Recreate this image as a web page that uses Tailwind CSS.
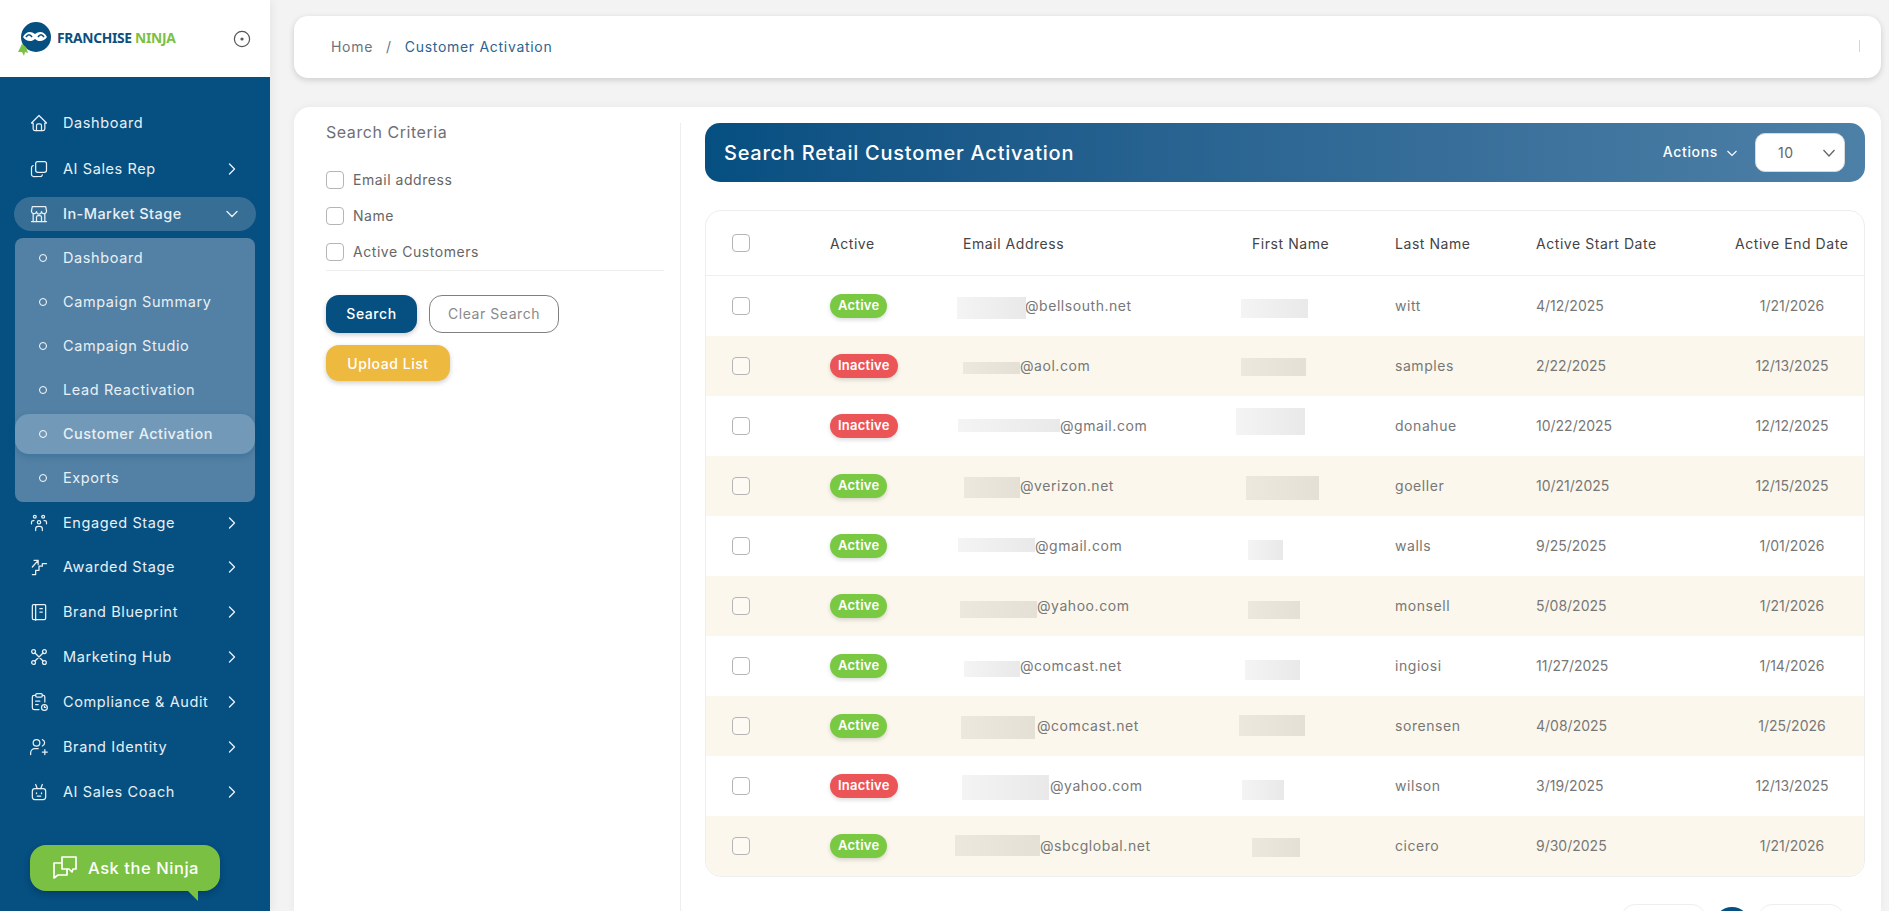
<!DOCTYPE html>
<html lang="en">
<head>
  <meta charset="UTF-8">
  <meta name="viewport" content="width=device-width, initial-scale=1.0">
  <script src="https://cdn.jsdelivr.net/npm/@tailwindcss/browser@4"></script>
  <title>Customer Activation - Franchise Ninja</title>
</head>
<body class="h-screen overflow-hidden bg-[#f3f3f3] font-['Inter',sans-serif] tracking-[0.55px]">
  <div class="flex h-full">
    <!-- Sidebar -->
    <aside class="w-[270px] h-full shrink-0 flex flex-col bg-[#054f81] shadow-[2px_0_8px_rgba(0,0,0,0.06)]">
      <div class="h-[77px] bg-white flex items-center pl-[17px] pr-[19px] shrink-0">
        <svg class="w-[36px] h-[34px] shrink-0" viewBox="0 0 36 34">
          <circle cx="19" cy="15" r="15" fill="#054f81"/>
          <path d="M1 30l4-8 4 3 2 6-3-1-1 4-2-4z" fill="#7ac143"/>
          <path d="M6 15c3-6 8-6 12-3 4-3 9-3 12 3-3 5-9 5-12 2-3 3-9 3-12-2z" fill="#fff"/>
          <path d="M9 15c2-3 4-3 6 0M21 15c2-3 4-3 6 0" fill="none" stroke="#054f81" stroke-width="1.6"/>
        </svg>
        <span class="ml-[4px] font-['Noto_Sans',sans-serif] font-bold text-[13.8px] tracking-[-0.3px] text-[#0b4f7e] whitespace-nowrap">FRANCHISE <span class="text-[#7ac143]">NINJA</span></span>
        <svg class="w-[18px] h-[18px] ml-auto" viewBox="0 0 18 18" fill="none" stroke="#555" stroke-width="1.2"><circle cx="9" cy="9" r="7.6"/><circle cx="9" cy="9" r="1" fill="#555"/></svg>
      </div>

      <nav class="text-[14.5px] text-[#e8f0f5] tracking-[0.6px] pt-[22px]">
        <a class="flex items-center h-[47px] pl-[29px] pr-[30px]">
          <svg class="w-5 h-5 mr-[14px]" viewBox="0 0 24 24" fill="none" stroke="currentColor" stroke-width="1.5" stroke-linecap="round" stroke-linejoin="round"><path d="M3 12l9-9 9 9h-2v7a2 2 0 0 1-2 2H7a2 2 0 0 1-2-2v-7z"/><path d="M9 21v-6a2 2 0 0 1 2-2h2a2 2 0 0 1 2 2v6"/></svg>
          Dashboard
        </a>
        <a class="flex items-center h-[45px] pl-[29px] pr-[30px]">
          <svg class="w-5 h-5 mr-[14px]" viewBox="0 0 24 24" fill="none" stroke="currentColor" stroke-width="1.5" stroke-linecap="round" stroke-linejoin="round"><rect x="8" y="3" width="13" height="13" rx="2.5"/><path d="M16 19a2.500 2.500 0 0 1-2.500 2h-8A2.500 2.500 0 0 1 3 18.500v-8A2.500 2.500 0 0 1 5 8"/></svg>
          AI Sales Rep
          <svg class="w-4 h-4 ml-auto" viewBox="0 0 16 16" fill="none" stroke="currentColor" stroke-width="1.4" stroke-linecap="round" stroke-linejoin="round"><path d="M5.500 3L10.500 8l-5 5"/></svg>
        </a>
        <a class="flex items-center h-[34px] mt-[6px] mx-[14px] pl-[15px] pr-[16px] rounded-[17px] bg-[#366e96] font-medium tracking-[0.45px]">
          <svg class="w-5 h-5 mr-[14px]" viewBox="0 0 24 24" fill="none" stroke="currentColor" stroke-width="1.5" stroke-linecap="round" stroke-linejoin="round"><path d="M3 21h18M4 3h16l1 5a3 3 0 0 1-6 1 3 3 0 0 1-6 0 3 3 0 0 1-6-1z"/><path d="M5 12v9M19 12v9M9 21v-5a2 2 0 0 1 2-2h2a2 2 0 0 1 2 2v5"/></svg>
          In-Market Stage
          <svg class="w-4 h-4 ml-auto" viewBox="0 0 16 16" fill="none" stroke="currentColor" stroke-width="1.4" stroke-linecap="round" stroke-linejoin="round"><path d="M3 5.500L8 10.500l5-5"/></svg>
        </a>
        <div class="mt-[7px] mx-[15px] pb-[4px] bg-[#5381a5] rounded-[8px] flex flex-col gap-[4px]">
          <a class="flex items-center h-[40px] pl-[24px]"><span class="w-2 h-2 rounded-full border border-white mr-[16px]"></span>Dashboard</a>
          <a class="flex items-center h-[40px] pl-[24px]"><span class="w-2 h-2 rounded-full border border-white mr-[16px]"></span>Campaign Summary</a>
          <a class="flex items-center h-[40px] pl-[24px]"><span class="w-2 h-2 rounded-full border border-white mr-[16px]"></span>Campaign Studio</a>
          <a class="flex items-center h-[40px] pl-[24px]"><span class="w-2 h-2 rounded-full border border-white mr-[16px]"></span>Lead Reactivation</a>
          <a class="flex items-center h-[40px] pl-[24px] rounded-[14px] bg-[#7299b7] font-medium tracking-[0.45px] shadow-[0_3px_6px_rgba(5,79,129,0.25)]"><span class="w-2 h-2 rounded-full border border-white mr-[16px]"></span>Customer Activation</a>
          <a class="flex items-center h-[40px] pl-[24px]"><span class="w-2 h-2 rounded-full border border-white mr-[16px]"></span>Exports</a>
        </div>
        <a class="flex items-center h-[42px] pl-[29px] pr-[30px]">
          <svg class="w-5 h-5 mr-[14px]" viewBox="0 0 24 24" fill="none" stroke="currentColor" stroke-width="1.5" stroke-linecap="round" stroke-linejoin="round"><circle cx="7" cy="4.500" r="1.700"/><circle cx="17" cy="4.500" r="1.700"/><circle cx="12" cy="11" r="2"/><path d="M8 21v-2a3 3 0 0 1 3-3h2a3 3 0 0 1 3 3v2M3 13v-2a2 2 0 0 1 2-2h1M21 13v-2a2 2 0 0 0-2-2h-1"/></svg>
          Engaged Stage
          <svg class="w-4 h-4 ml-auto" viewBox="0 0 16 16" fill="none" stroke="currentColor" stroke-width="1.4" stroke-linecap="round" stroke-linejoin="round"><path d="M5.500 3L10.500 8l-5 5"/></svg>
        </a>
        <a class="flex items-center h-[45px] pl-[29px] pr-[30px]">
          <svg class="w-5 h-5 mr-[14px]" viewBox="0 0 24 24" fill="none" stroke="currentColor" stroke-width="1.5" stroke-linecap="round" stroke-linejoin="round"><path d="M4 21h4v-5h4v-5h4V8h5"/><path d="M4 12l7-8M6 4h5v5"/></svg>
          Awarded Stage
          <svg class="w-4 h-4 ml-auto" viewBox="0 0 16 16" fill="none" stroke="currentColor" stroke-width="1.4" stroke-linecap="round" stroke-linejoin="round"><path d="M5.500 3L10.500 8l-5 5"/></svg>
        </a>
        <a class="flex items-center h-[45px] pl-[29px] pr-[30px]">
          <svg class="w-5 h-5 mr-[14px]" viewBox="0 0 24 24" fill="none" stroke="currentColor" stroke-width="1.5" stroke-linecap="round" stroke-linejoin="round"><rect x="4" y="3" width="16" height="18" rx="1.500"/><path d="M8 3v19M13 8h3M13 12h3"/></svg>
          Brand Blueprint
          <svg class="w-4 h-4 ml-auto" viewBox="0 0 16 16" fill="none" stroke="currentColor" stroke-width="1.4" stroke-linecap="round" stroke-linejoin="round"><path d="M5.500 3L10.500 8l-5 5"/></svg>
        </a>
        <a class="flex items-center h-[45px] pl-[29px] pr-[30px]">
          <svg class="w-5 h-5 mr-[14px]" viewBox="0 0 24 24" fill="none" stroke="currentColor" stroke-width="1.5" stroke-linecap="round" stroke-linejoin="round"><circle cx="5.500" cy="5.500" r="2.300"/><circle cx="18.500" cy="5.500" r="2.300"/><circle cx="5.500" cy="18.500" r="2.300"/><circle cx="18.500" cy="18.500" r="2.300"/><path d="M7.200 7.200l9.600 9.600M16.800 7.200l-9.600 9.600"/></svg>
          Marketing Hub
          <svg class="w-4 h-4 ml-auto" viewBox="0 0 16 16" fill="none" stroke="currentColor" stroke-width="1.4" stroke-linecap="round" stroke-linejoin="round"><path d="M5.500 3L10.500 8l-5 5"/></svg>
        </a>
        <a class="flex items-center h-[45px] pl-[29px] pr-[30px]">
          <svg class="w-5 h-5 mr-[14px]" viewBox="0 0 24 24" fill="none" stroke="currentColor" stroke-width="1.5" stroke-linecap="round" stroke-linejoin="round"><path d="M8 4H6a2 2 0 0 0-2 2v13a2 2 0 0 0 2 2h6M16 4h1a2 2 0 0 1 2 2v6"/><rect x="8" y="2" width="8" height="4" rx="1.500"/><path d="M8 11h5M8 15h3"/><circle cx="18.500" cy="18.500" r="3.500"/><path d="M18.500 17v1.500h1.500"/></svg>
          Compliance &amp; Audit
          <svg class="w-4 h-4 ml-auto" viewBox="0 0 16 16" fill="none" stroke="currentColor" stroke-width="1.4" stroke-linecap="round" stroke-linejoin="round"><path d="M5.500 3L10.500 8l-5 5"/></svg>
        </a>
        <a class="flex items-center h-[45px] pl-[29px] pr-[30px]">
          <svg class="w-5 h-5 mr-[14px]" viewBox="0 0 24 24" fill="none" stroke="currentColor" stroke-width="1.5" stroke-linecap="round" stroke-linejoin="round"><circle cx="9" cy="7" r="4"/><path d="M2 21v-2a5 5 0 0 1 5-5h4M16 3.200a4 4 0 0 1 0 7.600M19 15v6M16 18h6"/></svg>
          Brand Identity
          <svg class="w-4 h-4 ml-auto" viewBox="0 0 16 16" fill="none" stroke="currentColor" stroke-width="1.4" stroke-linecap="round" stroke-linejoin="round"><path d="M5.500 3L10.500 8l-5 5"/></svg>
        </a>
        <a class="flex items-center h-[45px] pl-[29px] pr-[30px]">
          <svg class="w-5 h-5 mr-[14px]" viewBox="0 0 24 24" fill="none" stroke="currentColor" stroke-width="1.5" stroke-linecap="round" stroke-linejoin="round"><rect x="4" y="8" width="16" height="13" rx="3"/><path d="M8 3l2 5M16 3l-2 5M9 13v1M15 13v1M10 17h4"/></svg>
          AI Sales Coach
          <svg class="w-4 h-4 ml-auto" viewBox="0 0 16 16" fill="none" stroke="currentColor" stroke-width="1.4" stroke-linecap="round" stroke-linejoin="round"><path d="M5.500 3L10.500 8l-5 5"/></svg>
        </a>
        <!-- Ask the Ninja -->
        <button class="relative flex items-center mt-[31px] ml-[30px] w-[190px] h-[46px] pl-[22px] rounded-[16px] bg-[#7ac143] text-white text-[16.5px] font-medium tracking-[0.55px] shadow-[0_3px_6px_rgba(0,0,0,0.2)]">
          <svg class="w-[26px] h-[26px] mr-[10px]" viewBox="0 0 26 26" fill="none" stroke="currentColor" stroke-width="1.7" stroke-linejoin="round"><path d="M10 2h14v12h-3l-1 3-3-3h-7z"/><path d="M10 8H2v15l4-3h9v-6"/></svg>
          Ask the Ninja
          <span class="absolute left-[158px] top-[46px] w-0 h-0 border-l-[10px] border-l-transparent border-t-[10px] border-t-[#7ac143]"></span>
        </button>
      </nav>
    </aside>

    <!-- Content -->
    <div class="flex-1 min-w-0 pl-[24px] pr-[8px] pt-[16px] flex flex-col">
      <div class="h-[62px] shrink-0 bg-white rounded-[14px] shadow-[0_2px_6px_rgba(0,0,0,0.16)] flex items-center pb-[2px] pl-[37px] pr-[21px] text-[14px] tracking-[0.7px]">
        <span class="text-[#6b7280]">Home</span>
        <span class="text-[#6b7280] mx-[13px]">/</span>
        <span class="text-[#2c6490]">Customer Activation</span>
        <span class="ml-auto w-px h-[12px] bg-[#d5d5d5]"></span>
      </div>

      <main class="mt-[29px] flex-1 min-h-0 bg-white rounded-t-[16px] pt-[16px] flex shadow-[0_0_8px_rgba(0,0,0,0.05)]">
        <!-- Search criteria -->
        <section class="w-[387px] shrink-0 pl-[32px] pr-[16px] border-r border-[#eeeeee]">
          <h2 class="h-[18px] leading-[18px] text-[16px] text-[#6f6f78]">Search Criteria</h2>
          <div class="mt-[30px] flex flex-col gap-[18px] text-[14px] text-[#666]">
            <label class="flex items-center h-[18px]"><span class="w-[18px] h-[18px] rounded-[4px] border border-[#b5b5b5] bg-white mr-[9px]"></span><span class="mb-[2px]">Email address</span></label>
            <label class="flex items-center h-[18px]"><span class="w-[18px] h-[18px] rounded-[4px] border border-[#b5b5b5] bg-white mr-[9px]"></span><span class="mb-[2px]">Name</span></label>
            <label class="flex items-center h-[18px]"><span class="w-[18px] h-[18px] rounded-[4px] border border-[#b5b5b5] bg-white mr-[9px]"></span><span class="mb-[2px]">Active Customers</span></label>
          </div>
          <div class="mt-[9px] border-t border-[#eeeeee]"></div>
          <div class="mt-[24px] flex gap-[12px] text-[14px]">
            <button class="w-[91px] h-[38px] pb-[2px] rounded-[13px] bg-[#054f81] text-white font-medium shadow-[0_2px_5px_rgba(0,0,0,0.2)]">Search</button>
            <button class="w-[130px] h-[38px] pb-[2px] rounded-[13px] border border-[#808080] text-[#8a8a8a]">Clear Search</button>
          </div>
          <button class="mt-[12px] w-[124px] h-[36px] rounded-[13px] bg-[#eeb93f] text-white text-[14px] font-medium shadow-[0_2px_5px_rgba(0,0,0,0.2)]">Upload List</button>
        </section>

        <!-- Results -->
        <section class="flex-1 min-w-0 pl-[24px] pr-[16px]">
          <div class="h-[59px] rounded-[15px] bg-gradient-to-r from-[#054f81] to-[#4d80a7] flex items-center pl-[19px] pr-[20px] text-white">
            <h1 class="text-[20px] font-medium tracking-[0.75px]">Search Retail Customer Activation</h1>
            <span class="ml-auto mb-[2px] text-[14px] font-medium tracking-[0.65px]">Actions</span>
            <svg class="w-[12px] h-[12px] ml-[8px] mr-[17px]" viewBox="0 0 12 12" fill="none" stroke="currentColor" stroke-width="1.1"><path d="M1.500 4L6 8.500 10.500 4"/></svg>
            <div class="w-[90px] h-[39px] bg-white rounded-[10px] flex items-center pl-[22px] pr-[8px] text-[14px] text-[#666] border border-[#d9d9d9]">
              10
              <svg class="w-[14px] h-[14px] ml-auto" viewBox="0 0 14 14" fill="none" stroke="#666" stroke-width="1.300"><path d="M1.500 4L7 10l5.500-6"/></svg>
            </div>
          </div>

          <div class="mt-[28px] border border-[#eeeeee] rounded-[16px] text-[14px]">
            <div class="grid grid-cols-[124px_133px_289px_143px_141px_199px_1fr] items-center h-[65px] border-b border-[#eeeeee] text-[#444]">
              <div class="pl-[26px]"><span class="block w-[18px] h-[18px] rounded-[4px] border border-[#b5b5b5]"></span></div>
              <div>Active</div>
              <div>Email Address</div>
              <div>First Name</div>
              <div>Last Name</div>
              <div>Active Start Date</div>
              <div class="whitespace-nowrap">Active End Date</div>
            </div>
            <div id="rows"></div>
          </div>

          <!-- Pagination, cut by the bottom of the window -->
          <div class="mt-[27px] flex justify-end items-start pr-[21px] gap-[8px]">
            <button aria-label="Previous page" class="w-[85px] h-[42px] rounded-[14px] border border-[#eeeeee]"></button>
            <button aria-label="Page 1" class="w-[36px] h-[36px] mt-[3px] rounded-full bg-[#054f81]"></button>
            <button aria-label="Next page" class="w-[86px] h-[42px] rounded-[14px] border border-[#eeeeee]"></button>
          </div>
        </section>
      </main>
    </div>
  </div>

  <script>
    // masked cells: x / y / w / h are measured from the row's own corner
    const customers = [
      { active: true,  domain: '@bellsouth.net', at: 319, mail: [251, 21, 69, 22], first: [535, 23, 67, 19], last: 'witt', start: '4/12/2025', end: '1/21/2026' },
      { active: false, domain: '@aol.com', at: 314, mail: [257, 26, 57, 12], first: [535, 22, 65, 18], last: 'samples', start: '2/22/2025', end: '12/13/2025' },
      { active: false, domain: '@gmail.com', at: 354, mail: [252, 23, 102, 13], first: [530, 12, 69, 27], last: 'donahue', start: '10/22/2025', end: '12/12/2025' },
      { active: true,  domain: '@verizon.net', at: 314, mail: [258, 21, 56, 21], first: [540, 20, 73, 24], last: 'goeller', start: '10/21/2025', end: '12/15/2025' },
      { active: true,  domain: '@gmail.com', at: 329, mail: [252, 22, 77, 14], first: [542, 24, 35, 20], last: 'walls', start: '9/25/2025', end: '1/01/2026' },
      { active: true,  domain: '@yahoo.com', at: 331, mail: [254, 25, 77, 17], first: [542, 25, 52, 18], last: 'monsell', start: '5/08/2025', end: '1/21/2026' },
      { active: true,  domain: '@comcast.net', at: 314, mail: [258, 25, 56, 16], first: [539, 24, 55, 20], last: 'ingiosi', start: '11/27/2025', end: '1/14/2026' },
      { active: true,  domain: '@comcast.net', at: 331, mail: [255, 20, 74, 23], first: [533, 19, 66, 21], last: 'sorensen', start: '4/08/2025', end: '1/25/2026' },
      { active: false, domain: '@yahoo.com', at: 344, mail: [256, 19, 87, 25], first: [536, 24, 42, 20], last: 'wilson', start: '3/19/2025', end: '12/13/2025' },
      { active: true,  domain: '@sbcglobal.net', at: 334, mail: [249, 19, 85, 21], first: [546, 22, 48, 19], last: 'cicero', start: '9/30/2025', end: '1/21/2026' }
    ];

    const box = ([x, y, w, h], cls) =>
      `<span class="absolute ${cls}" style="left:${x}px;top:${y}px;width:${w}px;height:${h}px"></span>`;

    document.getElementById('rows').innerHTML = customers.map((c, i) => {
      const even = i % 2 === 1;
      const mask = even ? 'bg-gradient-to-r from-[#ece8dd] to-[#e4e0d6]' : 'bg-gradient-to-r from-[#f4f4f4] to-[#e9e9e9]';
      return `
        <div class="relative grid grid-cols-[124px_133px_289px_143px_141px_199px_1fr] items-center h-[60px] text-[#777] ${even ? 'bg-[#fbf7ec]' : ''} ${i === customers.length - 1 ? 'rounded-b-[16px]' : ''}">
          <div class="pl-[26px]"><span class="block w-[18px] h-[18px] rounded-[4px] border border-[#b5b5b5] bg-white/40"></span></div>
          <div><span class="inline-flex items-center h-[24px] px-[8px] rounded-[12px] text-[13px] font-semibold tracking-[0.25px] text-white shadow-[0_2px_4px_rgba(0,0,0,0.15)] ${c.active ? 'bg-[#7ac943]' : 'bg-[#ec5558]'}">${c.active ? 'Active' : 'Inactive'}</span></div>
          <div class="relative mb-[2px] whitespace-nowrap" style="left:${c.at - 257}px">${c.domain}</div>
          <div></div>
          <div class="mb-[2px]">${c.last}</div>
          <div class="mb-[2px] tracking-normal">${c.start}</div>
          <div class="w-[114px] mb-[2px] text-center tracking-normal whitespace-nowrap">${c.end}</div>
          ${box(c.mail, mask)}${box(c.first, mask)}
        </div>`;
    }).join('');
  </script>
</body>
</html>
